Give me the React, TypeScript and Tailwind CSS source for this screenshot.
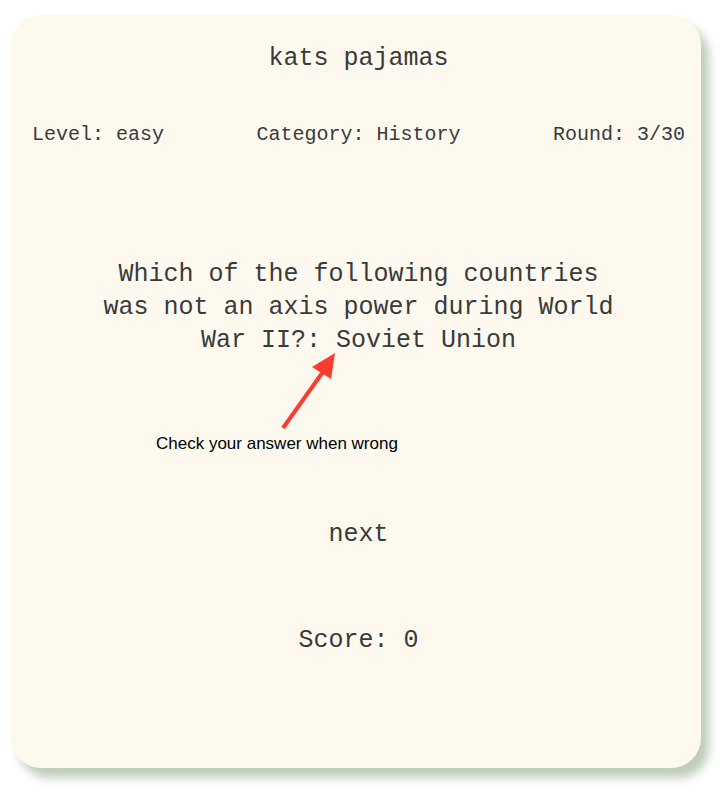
export default function App() {
  const mono = { fontFamily: '"Liberation Mono", "DejaVu Sans Mono", monospace' };

  return (
    <div className="w-full h-[794px] bg-white pt-[15px] pl-[11px]">
      <div
        className="relative w-[690px] h-[753px] rounded-[30px] bg-[#fdf9ef] shadow-[8px_10px_10px_rgba(170,188,165,0.75)] pl-[21px] pr-[16px] pt-[27px] flex flex-col text-[#3a3a3a]"
        style={mono}
      >
        {/* Title */}
        <h1 className="text-center text-[25px] leading-[33px]">kats pajamas</h1>

        {/* Game info */}
        <div className="mt-[46px] flex justify-between text-[20px] leading-[28px]">
          <span>Level: easy</span>
          <span>Category: History</span>
          <span>Round: 3/30</span>
        </div>

        {/* Question */}
        <p className="mt-[109px] mx-auto w-[530px] text-center text-[25px] leading-[33px]">
          Which of the following countries was not an axis power during World War II?: Soviet Union
        </p>

        <button className="mt-[161px] mx-auto text-[25px] leading-[33px]">next</button>

        <p className="mt-[73px] text-center text-[25px] leading-[33px]">Score: 0</p>

        {/* Annotation overlay */}
        <svg className="absolute left-0 top-0 pointer-events-none" width="690" height="753">
          <line x1="272" y1="413" x2="314" y2="354" stroke="#fe3b30" strokeWidth="4" />
          <polygon points="324,338 301,352 320,364" fill="#fe3b30" />
        </svg>
        <span
          className="absolute left-[145px] top-[419px] text-[17px] leading-[20px] text-black"
          style={{ fontFamily: '"Liberation Sans", Arial, sans-serif' }}
        >
          Check your answer when wrong
        </span>
      </div>
    </div>
  );
}
